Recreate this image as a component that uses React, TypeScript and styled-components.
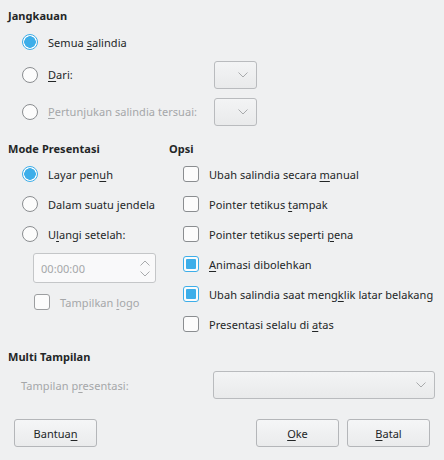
import styled, { createGlobalStyle } from "styled-components";

const GlobalStyle = createGlobalStyle`
  html, body {
    margin: 0;
    padding: 0;
    background: #eff0f1;
  }
  body {
    font-family: "Noto Sans", "DejaVu Sans", sans-serif;
    font-size: 11px;
    letter-spacing: 0.05px;
    color: #232627;
  }
`;

const Root = styled.div`
  width: 444px;
  height: 460px;
  box-sizing: border-box;
  padding: 6px 9px 0 8px;
  display: flex;
  flex-direction: column;
`;

const Title = styled.div`
  height: 20px;
  line-height: 20px;
  font-weight: bold;
`;

const Row = styled.div<{ indent: number; height?: number }>`
  display: flex;
  align-items: center;
  height: ${({ height }) => height ?? 30}px;
  padding-left: ${({ indent }) => indent}px;
  gap: 10px;
`;

const Label = styled.span<{ disabled?: boolean; width?: number }>`
  white-space: nowrap;
  color: ${({ disabled }) => (disabled ? "#a5a7a9" : "#232627")};
  ${({ width }) => (width ? `width: ${width}px; flex: none;` : "flex: 1;")}
  u {
    text-decoration: underline;
    text-underline-offset: 2px;
  }
`;

const RadioBox = styled.span<{ checked?: boolean }>`
  width: 16px;
  height: 16px;
  border-radius: 50%;
  box-sizing: border-box;
  flex: none;
  border: 1px solid ${({ checked }) => (checked ? "#3daee9" : "#8a8d90")};
  background: ${({ checked }) =>
    checked ? "radial-gradient(circle, #3daee9 0 5.5px, #fcfcfc 6px)" : "#fcfcfc"};
`;

const CheckBox = styled.span<{ checked?: boolean; disabled?: boolean }>`
  width: 16px;
  height: 16px;
  border-radius: 3px;
  box-sizing: border-box;
  flex: none;
  border: 1px solid
    ${({ checked, disabled }) =>
      checked ? "#3daee9" : disabled ? "#9c9ea0" : "#8a8d90"};
  background: #fcfcfc;
  padding: 2px;
  &::after {
    content: "";
    display: ${({ checked }) => (checked ? "block" : "none")};
    width: 100%;
    height: 100%;
    background: #3daee9;
    border-radius: 1px;
  }
`;

const Combo = styled.div<{ width: number }>`
  width: ${({ width }) => width}px;
  height: 28px;
  box-sizing: border-box;
  border: 1px solid #b9bbbe;
  border-radius: 3px;
  background: linear-gradient(#f3f4f5, #e9eaeb);
  display: flex;
  align-items: center;
  justify-content: flex-end;
  padding-right: 8px;
  flex: none;
`;

const Chevron = ({ up }: { up?: boolean }) => (
  <svg width="10" height="6" viewBox="0 0 10 6">
    <path
      d={up ? "M0.5 5.5 L5 1 L9.5 5.5" : "M0.5 0.5 L5 5 L9.5 0.5"}
      fill="none"
      stroke="#a8aaac"
      strokeWidth="1"
    />
  </svg>
);

const Columns = styled.div`
  display: flex;
  margin-top: 13px;
`;

const Column = styled.div<{ width?: number }>`
  display: flex;
  flex-direction: column;
  ${({ width }) => (width ? `width: ${width}px;` : "flex: 1;")}
`;

const SpinBox = styled.div`
  margin: 4px 0 0 25px;
  width: 123px;
  height: 30px;
  box-sizing: border-box;
  border: 1px solid #c4c6c8;
  border-radius: 3px;
  background: #f9f9fa;
  display: flex;
  align-items: center;
  justify-content: space-between;
  padding: 0 5px 0 7px;
  color: #a5a7a9;
`;

const SpinArrows = styled.div`
  display: flex;
  flex-direction: column;
  gap: 5px;
`;

const Buttons = styled.div`
  display: flex;
  margin-top: 20px;
  padding-left: 6px;
  padding-right: 5px;
  gap: 8px;
`;

const Spacer = styled.div`
  flex: 1;
`;

const Button = styled.button`
  width: 83px;
  height: 28px;
  box-sizing: border-box;
  border: 1px solid #b4b6b9;
  border-radius: 3px;
  background: linear-gradient(#f5f6f7, #eaebec);
  font-family: inherit;
  font-size: 11px;
  color: #232627;
  padding: 0;
  u {
    text-underline-offset: 2px;
  }
`;

const options: { label: React.ReactNode; checked?: boolean }[] = [
  { label: <>Ubah salindia secara <u>m</u>anual</> },
  { label: <>Pointer tetikus <u>t</u>ampak</> },
  { label: <>Pointer tetikus seperti <u>p</u>ena</> },
  { label: <><u>A</u>nimasi dibolehkan</>, checked: true },
  { label: <>Ubah salindia saat meng<u>k</u>lik latar belakang</>, checked: true },
  { label: <>Presentasi selalu di <u>a</u>tas</> },
];

export default function App() {
  return (
    <>
      <GlobalStyle />
      <Root>
        <Title>Jangkauan</Title>
        <Row indent={14} style={{ marginTop: 1 }}>
          <RadioBox checked />
          <Label>
            Semua <u>s</u>alindia
          </Label>
        </Row>
        <Row indent={14} height={29} style={{ marginTop: 3 }}>
          <RadioBox />
          <Label width={156}>
            <u>D</u>ari:
          </Label>
          <Combo width={43}>
            <Chevron />
          </Combo>
        </Row>
        <Row indent={14} height={29} style={{ marginTop: 8 }}>
          <RadioBox />
          <Label disabled width={156}>
            <u>P</u>ertunjukan salindia tersuai:
          </Label>
          <Combo width={43}>
            <Chevron />
          </Combo>
        </Row>
        <Columns>
          <Column width={161}>
            <Title>Mode Presentasi</Title>
            <Row indent={14}>
              <RadioBox checked />
              <Label>
                Layar pen<u>u</u>h
              </Label>
            </Row>
            <Row indent={14}>
              <RadioBox />
              <Label>
                Dalam suatu <u>j</u>endela
              </Label>
            </Row>
            <Row indent={14}>
              <RadioBox />
              <Label>
                U<u>l</u>angi setelah:
              </Label>
            </Row>
            <SpinBox>
              <span>00:00:00</span>
              <SpinArrows>
                <Chevron up />
                <Chevron />
              </SpinArrows>
            </SpinBox>
            <Row indent={26} height={30} style={{ marginTop: 4 }}>
              <CheckBox disabled />
              <Label disabled>
                Tampilkan <u>l</u>ogo
              </Label>
            </Row>
          </Column>
          <Column>
            <Title>Opsi</Title>
            {options.map((o, i) => (
              <Row key={i} indent={14}>
                <CheckBox checked={o.checked} />
                <Label>{o.label}</Label>
              </Row>
            ))}
          </Column>
        </Columns>
        <Title style={{ marginTop: 8 }}>Multi Tampilan</Title>
        <Row indent={13} height={28} style={{ marginTop: 4 }}>
          <Label disabled>
            Tampilan p<u>r</u>esentasi:
          </Label>
          <Combo width={222}>
            <Chevron />
          </Combo>
        </Row>
        <Buttons>
          <Button>
            Bantua<u>n</u>
          </Button>
          <Spacer />
          <Button>
            <u>O</u>ke
          </Button>
          <Button>
            <u>B</u>atal
          </Button>
        </Buttons>
      </Root>
    </>
  );
}
